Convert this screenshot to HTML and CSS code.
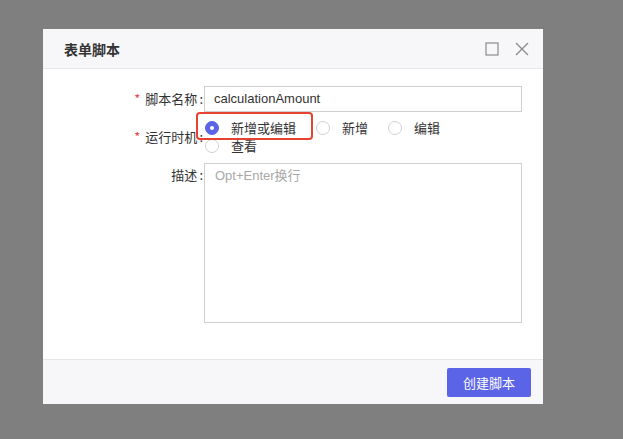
FILE: index.html
```html
<!DOCTYPE html>
<html>
<head>
  <meta charset="UTF-8">
  <title>表单脚本</title>
  <link rel="stylesheet" href="styles.css">
</head>
<body>

<div class="dialog">
  <div class="dialog-header">
    <span class="dialog-title">表单脚本</span>
    <div class="header-tools">
      <svg width="14" height="14" viewBox="0 0 14 14"><rect x="1" y="1" width="12" height="12" fill="none" stroke="#8a8a8a" stroke-width="1.2"/></svg>
      <svg width="14" height="14" viewBox="0 0 14 14"><path d="M1 1 L13 13 M13 1 L1 13" stroke="#8a8a8a" stroke-width="1.3" fill="none"/></svg>
    </div>
  </div>

  <div class="dialog-body">
    <!-- 脚本名称 -->
    <div class="form-row row-name">
      <label class="form-label"><span class="req">*</span>脚本名称<span class="colon">:</span></label>
      <div class="field">
        <div class="text-input">calculationAmount</div>
      </div>
    </div>

    <!-- 运行时机 -->
    <div class="form-row row-timing">
      <label class="form-label"><span class="req">*</span>运行时机<span class="colon">:</span></label>
      <div class="field">
        <div class="radio-group">
          <div class="radio-item"><span class="radio on"></span>新增或编辑</div>
          <div class="radio-item"><span class="radio"></span>新增</div>
          <div class="radio-item"><span class="radio"></span>编辑</div>
          <div class="radio-item"><span class="radio"></span>查看</div>
          <div class="highlight"></div>
        </div>
      </div>
    </div>

    <!-- 描述 -->
    <div class="form-row row-desc">
      <label class="form-label">描述<span class="colon">:</span></label>
      <div class="field">
        <div class="textarea"><span class="placeholder">Opt+Enter换行</span></div>
      </div>
    </div>
  </div>

  <div class="dialog-footer">
    <button class="btn-primary">创建脚本</button>
  </div>
</div>

</body>
</html>
```

FILE: styles.css
```css
body {
  margin: 0;
  background: #7f7f7f;
  font-family: "Noto Sans CJK SC", "Liberation Sans", sans-serif;
  font-size: 13px;
  color: #333;
}

.dialog {
  margin: 29px 0 0 43px;
  width: 500px;
  height: 375px;
  background: #fff;
  display: flex;
  flex-direction: column;
}

.dialog-header {
  height: 39px;
  background: #f7f7f9;
  border-bottom: 1px solid #e6e6ea;
  display: flex;
  align-items: center;
  justify-content: space-between;
  padding: 0 14px 0 21px;
}
.dialog-title {
  font-size: 14px;
  font-weight: bold;
  color: #333;
}
.header-tools {
  display: flex;
  gap: 16px;
  align-items: center;
}
.header-tools svg {
  display: block;
}

.dialog-body {
  flex-grow: 1;
  padding-top: 17px;
}

.form-row {
  display: flex;
}
.form-label {
  width: 160px;
  text-align: right;
  padding-right: 1px;
  color: #333;
  line-height: 26px;
  white-space: nowrap;
}
.req {
  color: #e5484d;
  margin-right: 5px;
}
.colon {
  margin-left: 2px;
}
.field {
  width: 318px;
}

.text-input {
  height: 24px;
  line-height: 24px;
  border: 1px solid #cfcfcf;
  padding-left: 9px;
  font-family: "Liberation Sans", "Noto Sans CJK SC", sans-serif;
  font-size: 13px;
  color: #333;
}

.row-timing {
  margin-top: 7px;
  align-items: center;
}
.radio-group {
  position: relative;
  display: flex;
  flex-wrap: wrap;
  width: 270px;
}
.radio-item {
  display: flex;
  align-items: center;
  height: 18px;
  margin-right: 19px;
  line-height: 18px;
}
.radio {
  width: 12px;
  height: 12px;
  border: 1px solid #d0d0d0;
  border-radius: 50%;
  margin-right: 12px;
  margin-left: 1px;
  position: relative;
  background: #fff;
}
.radio.on {
  background: #5b63e6;
  border-color: #5b63e6;
}
.radio.on::after {
  content: "";
  position: absolute;
  left: 4px;
  top: 4px;
  width: 4px;
  height: 4px;
  border-radius: 50%;
  background: #fff;
}

/* 标注框 */
.highlight {
  position: absolute;
  left: -8px;
  top: -7px;
  width: 113px;
  height: 24px;
  border: 2px solid #e5432f;
  border-radius: 4px;
}

.row-desc {
  margin-top: 8px;
}
.row-desc .form-label {
  line-height: 24px;
}
.textarea {
  box-sizing: border-box;
  height: 160px;
  border: 1px solid #cfcfcf;
  padding: 1px 10px;
}
.placeholder {
  color: #a8a8a8;
  font-family: "Liberation Sans", "Noto Sans CJK SC", sans-serif;
  font-size: 13px;
}

.dialog-footer {
  height: 44px;
  background: #f7f7f9;
  border-top: 1px solid #e6e6ea;
  display: flex;
  justify-content: flex-end;
  align-items: center;
  padding-right: 12px;
}
.btn-primary {
  width: 84px;
  height: 29px;
  border: none;
  border-radius: 2px;
  background: #5b63e6;
  color: #fff;
  font-family: "Noto Sans CJK SC", sans-serif;
  font-size: 13px;
}
```
